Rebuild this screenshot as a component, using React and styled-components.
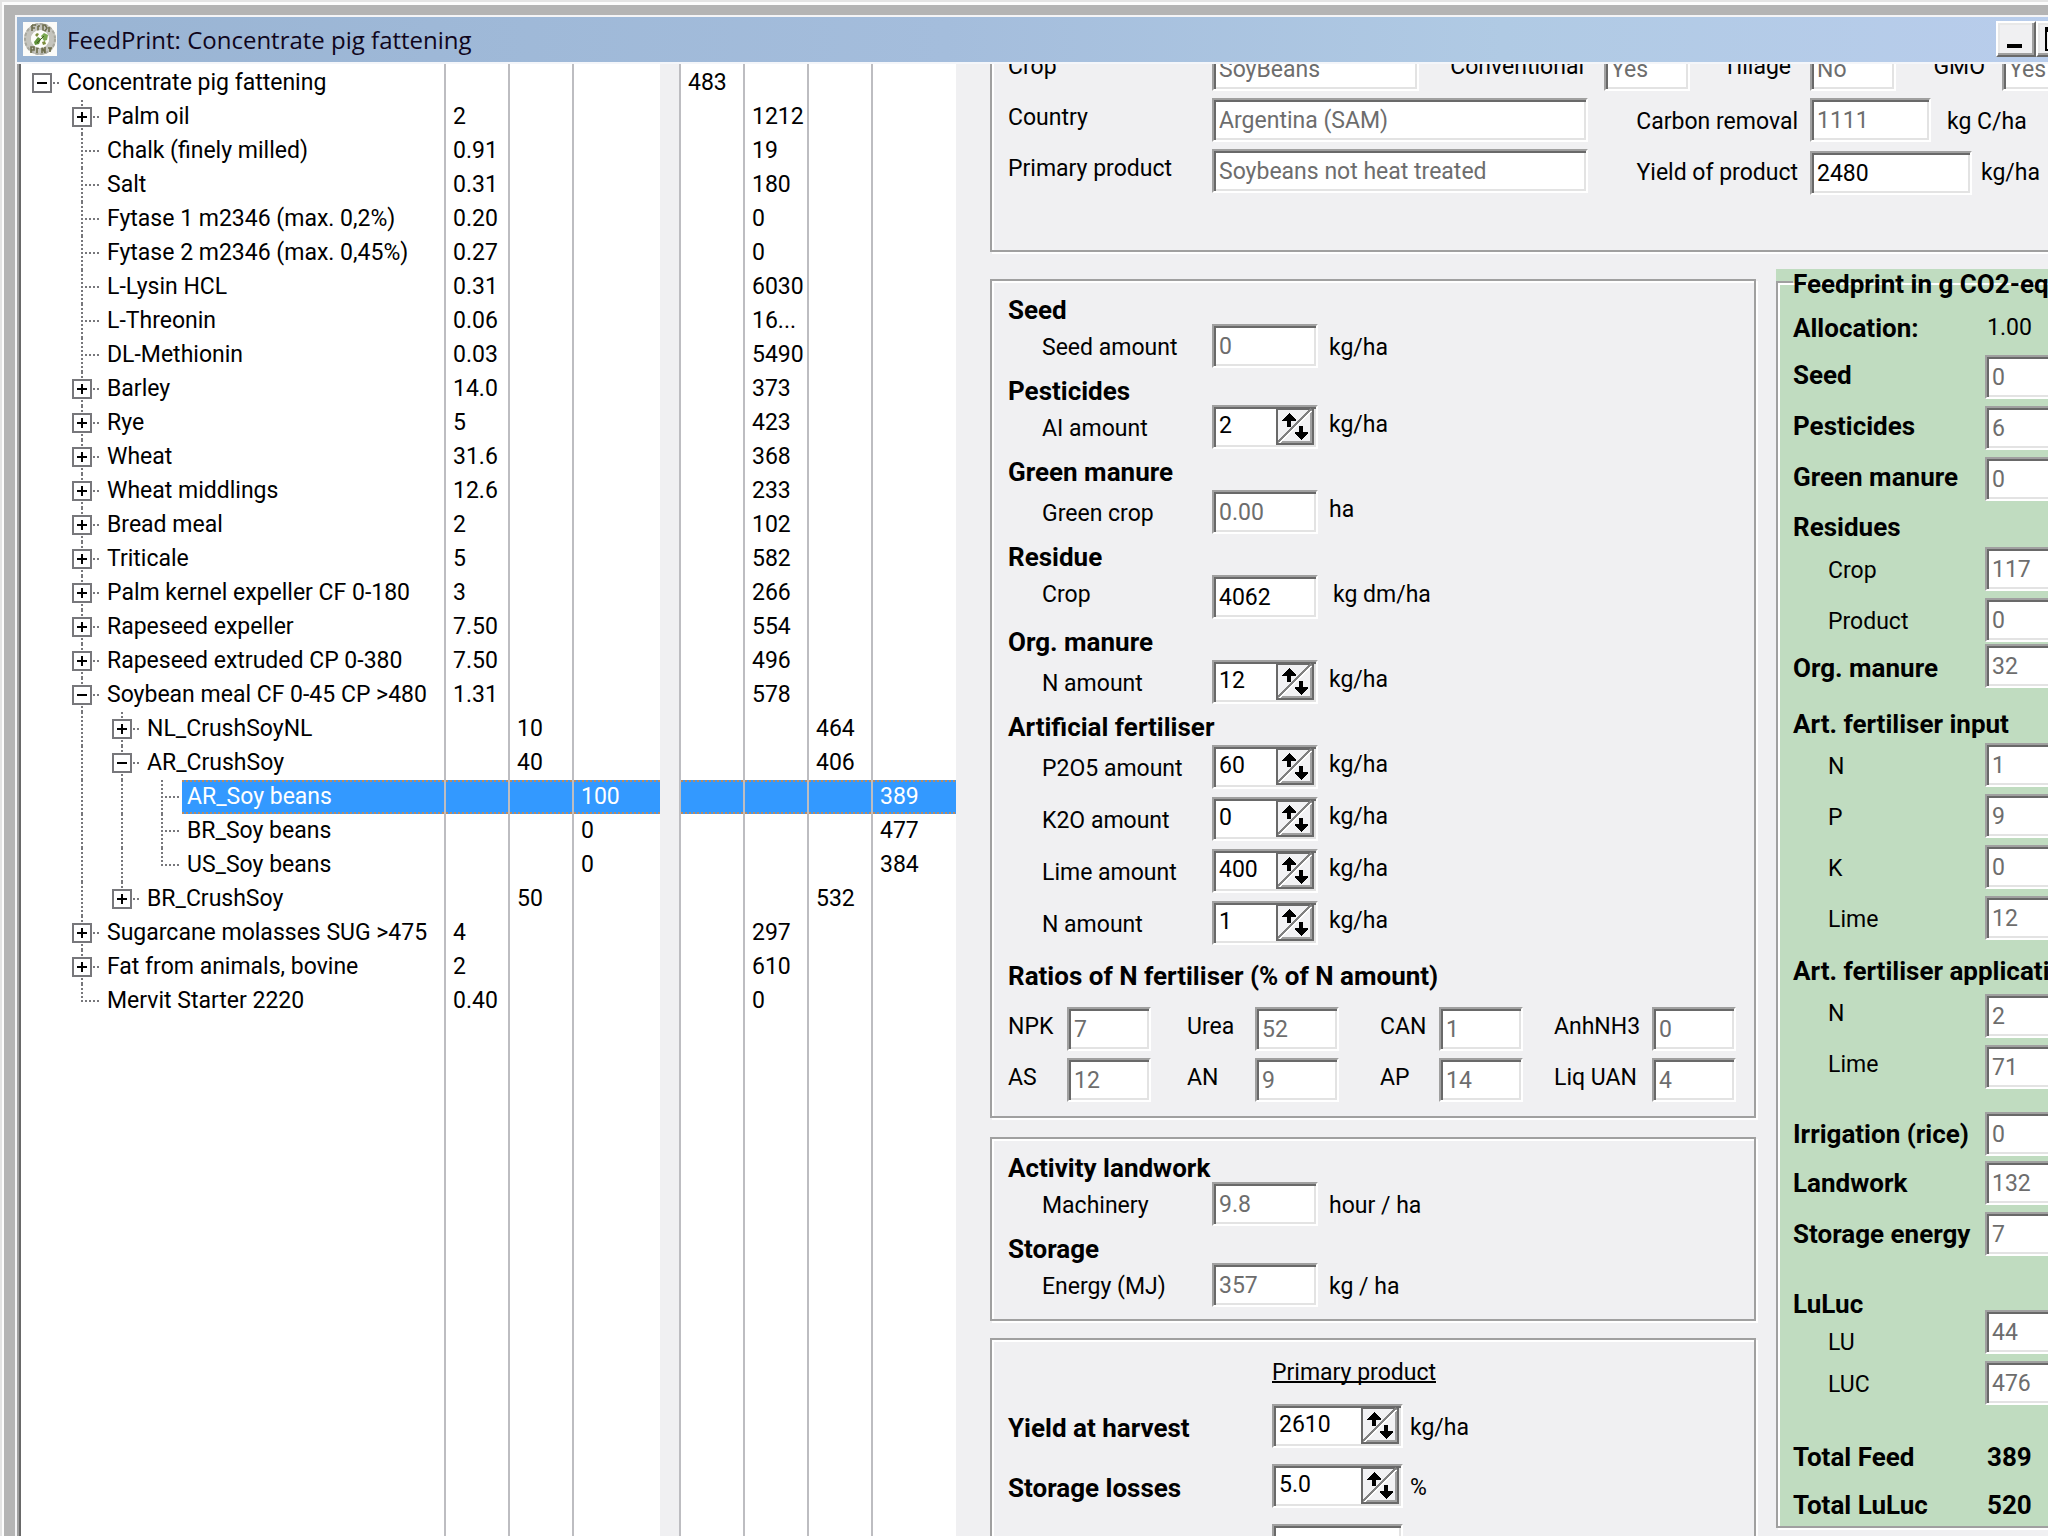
import React, { useId } from "react";
import styled, { createGlobalStyle, css } from "styled-components";

const GlobalStyle = createGlobalStyle`
  *, *::before, *::after { box-sizing: border-box; }
  body { margin: 0; overflow: hidden; background: #b4b4b4; }
  button, input { font: inherit; color: inherit; }
`;

const FACE = "#f0f0f2";
const SHADOW = "#a0a0a0";
const DARK = "#696969";

/* ---------- window frame ---------- */

const Desktop = styled.div`
  height: 100vh;
  overflow: hidden;
  font-family: Roboto, "Liberation Sans", sans-serif;
  font-size: 23px;
  line-height: 28px;
  color: #000;
`;

const Window = styled.main`
  display: flex;
  flex-direction: column;
  width: calc(100% + 51px);
  height: 100%;
  padding: 10px 15px 0 11px;
  background: #b4b4b4;
  border: solid #e4e4e4;
  border-width: 2px 2px 0;
  box-shadow: inset 2px 3px 0 #fcfcfc;
`;

const Frame = styled.div`
  display: flex;
  flex-direction: column;
  flex: 1;
  min-height: 0;
  margin-top: 3px;
  margin-left: 2px;
  border: solid #f4f4f6;
  border-width: 2px 2px 0;
`;

const TitleBar = styled.header`
  display: flex;
  align-items: center;
  flex: none;
  height: 47px;
  padding: 0 4px 2px 6px;
  border-bottom: 2px solid #f4f6fa;
  background: linear-gradient(90deg, #99b4d3, #a4bddc 45%, #b0cae4 72%, #b9cdec);
`;

const Title = styled.h1`
  flex: 1;
  margin: 0 0 0 10px;
  padding-top: 2px;
  font-family: "Open Sans", "Noto Sans", sans-serif;
  font-size: 24px;
  font-weight: 400;
  line-height: 32px;
  color: #10061c;
`;

const CaptionButton = styled.button`
  display: flex;
  flex: none;
  width: 40px;
  height: 36px;
  padding: 0;
  background: ${FACE};
  border: 2px solid;
  border-color: #fff ${DARK} ${DARK} #fff;
  box-shadow: inset -2px -2px 0 ${SHADOW}, inset 2px 2px 0 #e8e8e8;
`;

const Client = styled.div`
  display: flex;
  flex: 1;
  min-height: 0;
`;

/* ---------- feed tree ---------- */

const TreePane = styled.section`
  flex: none;
  border-left: 2px solid ${SHADOW};
  background: ${FACE};
`;

const TreeTable = styled.table`
  width: 937px;
  height: 100%;
  table-layout: fixed;
  border-spacing: 0;
  border-left: 2px solid ${DARK};
`;

const line = "2px solid #bdbdc1";

const selectedFill = css`
  color: #fff;
  background:
    repeating-linear-gradient(90deg, #b98a62 0 2px, transparent 2px 4px) 0 0 / 100% 2px no-repeat,
    repeating-linear-gradient(90deg, #b98a62 0 2px, transparent 2px 4px) 0 100% / 100% 2px no-repeat,
    #3399ff;
`;

const NameCell = styled.td`
  padding: 0 0 0 1px;
  background: #fff;
  border-right: ${line};
`;

const ValueCell = styled.td`
  padding: 0 0 0 7px;
  white-space: nowrap;
  background: #fff;
  border-right: ${(p) => (p.$last ? "none" : line)};
  border-left: ${(p) => (p.$first ? line : "none")};
  ${(p) => p.$selected && selectedFill}
`;

const SplitterCell = styled.td`
  padding: 0;
  background: ${FACE};
`;

const TreeRow = styled.tr`
  height: 34px;

  &:first-child > td { padding-top: 2px; }
`;

const NodeLine = styled.div`
  display: flex;
  height: 34px;
`;

const dotsDown = "repeating-linear-gradient(#77777b 0 2px, #fff 2px 4px)";
const dotsAcross = "repeating-linear-gradient(90deg, #77777b 0 2px, #fff 2px 4px)";

const Guide = styled.span`
  display: flex;
  align-items: center;
  justify-content: center;
  flex: none;
  width: 40px;
  background-repeat: no-repeat;
  background-image: ${dotsDown}, ${dotsAcross};
  background-position: 19px 0, 19px 16px;
  background-size:
    2px ${(p) => ({ none: "0", half: "18px", full: "100%" })[p.$down]},
    ${(p) => (p.$across ? "18px" : "0")} 2px;
`;

const NodeText = styled.span`
  flex: 1;
  padding-left: 5px;
  line-height: 34px;
  white-space: nowrap;
  ${(p) => p.$selected && selectedFill}
`;

const Expander = styled.button`
  display: block;
  width: 20px;
  height: 20px;
  padding: 0;
  background: #fff;
  border: 2px solid #77777b;

  svg { display: block; }
`;

/* ---------- form ---------- */

const FormPane = styled.section`
  flex: 1;
  min-width: 0;
  overflow: hidden;
  padding-left: 34px;
  background: ${FACE};
`;

const Scrolled = styled.div`
  margin-top: -30px;
`;

const etched = css`
  border: 2px solid ${SHADOW};
  box-shadow: 2px 2px 0 #fff, inset 2px 2px 0 #fff;
`;

const Group = styled.section`
  ${etched}
  padding: ${(p) => p.$pad};
`;

const Columns = styled.div`
  display: flex;
  align-items: flex-start;
  gap: ${(p) => p.$gap || 0}px;
  margin-top: ${(p) => p.$top || 0}px;
`;

const Inputs = styled.div`
  display: flex;
  flex-direction: column;
  flex: none;
  width: 766px;
  padding-top: 10px;
`;

const Stack = styled.div`
  display: flex;
  flex-direction: column;
  flex: none;
  gap: ${(p) => p.$gap}px;
  margin-top: ${(p) => p.$top || 0}px;
`;

const boldText = css`
  font-size: 26px;
  font-weight: 700;
`;

const Heading = styled.h2`
  margin: 0;
  padding: ${(p) => p.$top ?? 9}px 0 ${(p) => p.$bottom ?? 4}px;
  ${boldText}
  line-height: 28px;
  white-space: nowrap;
`;

const Row = styled.div`
  display: flex;
  align-items: center;
  height: 44px;
  margin-top: ${(p) => p.$top || 0}px;
`;

/* how far a caption sits above the foot of its row */
const lifts = { low: 0, middle: 4, high: 8 };

const caption = css`
  padding-top: 4px;
  padding-bottom: ${(p) => lifts[p.$lift || "low"]}px;
`;

const Label = styled.label`
  flex: none;
  width: ${(p) => p.$width}px;
  padding-left: ${(p) => p.$indent || 0}px;
  padding-right: ${(p) => p.$end || 0}px;
  ${caption}
  text-align: ${(p) => (p.$end ? "right" : "left")};
  ${(p) => p.$bold && boldText}
  white-space: nowrap;
`;

const Unit = styled.span`
  padding-left: ${(p) => p.$gap || 11}px;
  ${caption}
  white-space: nowrap;
`;

const sunken = css`
  flex: none;
  width: ${(p) => p.$width || 106}px;
  height: 44px;
  background: #fff;
  border: 2px solid;
  border-color: ${SHADOW} #fff #fff ${SHADOW};
  box-shadow: inset 2px 2px 0 ${DARK}, inset -2px -2px 0 #e3e3e3;
`;

const TextBox = styled.input`
  ${sunken}
  padding: 0 4px 0 5px;
  border-radius: 0;
  outline: none;
  color: ${(p) => (p.readOnly ? "#6d6d6d" : "#000")};
`;

const SpinFrame = styled.span`
  ${sunken}
  display: flex;
  align-items: center;
  padding: 1px 2px 2px 5px;
`;

const SpinInput = styled.input`
  flex: 1;
  min-width: 0;
  padding: 0 0 1px;
  border: 0;
  outline: none;
  background: transparent;
`;

const SpinButton = styled.button`
  flex: none;
  width: 38px;
  height: 37px;
  padding: 0;
  border: 0;
  background: ${FACE};

  svg { display: block; }
`;

const ColumnTitle = styled.h3`
  margin: 0;
  padding: 19px 0 17px 264px;
  font-size: 23px;
  font-weight: 400;
  line-height: 28px;
  text-decoration: underline;
  text-decoration-skip-ink: none;
  text-decoration-thickness: 2px;
`;

const RatioPair = styled.div`
  display: grid;
  grid-template-columns: ${(p) => p.$label}px 84px;
  row-gap: 7px;
  align-items: center;
  padding-left: ${(p) => p.$lead}px;
`;

const Footprint = styled.div`
  flex: 1;
  min-width: 0;
  background: #c0dcc0;
`;

const FootprintSet = styled.fieldset`
  ${etched}
  min-width: 0;
  margin: 0;
  padding: 0 0 1px 15px;
`;

const Legend = styled.legend`
  padding: 4px 2px 0 0;
  ${boldText}
  line-height: 22px;
  white-space: nowrap;
`;

const LandUse = styled.div`
  display: grid;
  grid-template-columns: 192px 84px;
  margin-top: 27px;
`;

const LandUseLabels = styled.div`
  display: grid;
  grid-auto-rows: 40px;
  align-items: center;
`;

const Output = styled.output`
  padding-left: 2px;
  ${caption}
  ${(p) => p.$bold && boldText}
`;

/* ---------- drawings ---------- */

const AppIcon = () => (
  <svg width="34" height="34" viewBox="0 0 34 34" aria-hidden="true">
    <rect width="34" height="34" fill="#fbfbf8" />
    <circle cx="17" cy="17" r="12.5" fill="none" stroke="#c4c4bd" strokeWidth="7" />
    <circle cx="17" cy="17" r="15" fill="none" stroke="#a8a89e" strokeWidth="2" strokeDasharray="3 2" />
    <path d="M9 3v6M9 3h4M9 6h3M15 4v5h2M15 4h2M20 3v6h2l2-3-2-3zM26 5v5" fill="none" stroke="#6d6d4c" strokeWidth="1.6" />
    <path d="M8 31v-6h3v3H8M14 31v-5h2M19 31v-6l3 6v-6M25 26h4M27 26v4" fill="none" stroke="#6d6d4c" strokeWidth="1.6" />
    <circle cx="17" cy="17" r="9" fill="#fdfdfa" />
    <path d="M11 20l4-5 3 2-2 5-4 1z" fill="#5f9138" />
    <path d="M18 14l3-3 4 2-1 5-3 1z" fill="#7ba850" />
    <path d="M19 20l3-1 1 3-3 1zM12 13l2-2 2 1-2 3z" fill="#7c8c3c" />
    <path d="M14 21l7-7" stroke="#3f5a20" strokeWidth="1" />
  </svg>
);

const MinimizeGlyph = () => (
  <svg width="36" height="32" viewBox="0 0 36 32" aria-hidden="true">
    <rect x="9" y="21" width="15" height="4" fill="#000" />
  </svg>
);

const MaximizeGlyph = () => (
  <svg width="36" height="32" viewBox="0 0 36 32" aria-hidden="true">
    <path d="M7 4h21v24H7zM9 9v17h17V9z" fill="#000" fillRule="evenodd" />
  </svg>
);

const SpinGlyph = () => (
  <svg width="38" height="37" viewBox="0 0 38 37" shapeRendering="crispEdges" aria-hidden="true">
    <rect width="38" height="37" fill={DARK} />
    <rect x="2" y="2" width="34" height="33" fill={SHADOW} />
    <rect x="2" y="2" width="32" height="31" fill="#f2f2f4" />
    <path d="M3 35L35 3" stroke="#fff" strokeWidth="2" />
    <path d="M2 34L35 1" stroke="#808080" strokeWidth="2" />
    <path d="M13 5l2 2 5 5v1h-5v6h-4v-6H6v-1l5-5z" fill="#000" />
    <path d="M25 32l-2-2-4-4v-2h4v-6h4v6h5v2l-5 4z" fill="#000" />
  </svg>
);

/* ---------- parts ---------- */

function Field({ label, value, unit, width, labelWidth = 204, indent = 0, end, lift, bold, unitLift, unitGap, edit, spin, top }) {
  const id = useId();
  return (
    <Row $top={top}>
      <Label htmlFor={id} $width={labelWidth} $indent={indent} $end={end} $lift={lift} $bold={bold}>
        {label}
      </Label>
      {spin ? (
        <SpinFrame $width={width}>
          <SpinInput id={id} defaultValue={value} />
          <SpinButton type="button" aria-label="Adjust value">
            <SpinGlyph />
          </SpinButton>
        </SpinFrame>
      ) : (
        <TextBox id={id} defaultValue={value} readOnly={!edit} $width={width} />
      )}
      {unit && (
        <Unit $gap={unitGap} $lift={unitLift}>
          {unit}
        </Unit>
      )}
    </Row>
  );
}

const Amount = (props) => <Field indent={34} unit="kg/ha" {...props} />;
const Result = (props) => <Field labelWidth={192} width={84} {...props} />;

function Ratio({ label, value }) {
  const id = useId();
  return (
    <>
      <Label htmlFor={id} $lift="high">{label}</Label>
      <TextBox id={id} defaultValue={value} readOnly $width={84} />
    </>
  );
}

/* level, name, expander, values per column, last child of its parent */
const nodes = [
  [0, "Concentrate pig fattening", "-", { 3: "483" }],
  [1, "Palm oil", "+", { 0: "2", 4: "1212" }],
  [1, "Chalk (finely milled)", "", { 0: "0.91", 4: "19" }],
  [1, "Salt", "", { 0: "0.31", 4: "180" }],
  [1, "Fytase 1 m2346 (max. 0,2%)", "", { 0: "0.20", 4: "0" }],
  [1, "Fytase 2 m2346 (max. 0,45%)", "", { 0: "0.27", 4: "0" }],
  [1, "L-Lysin HCL", "", { 0: "0.31", 4: "6030" }],
  [1, "L-Threonin", "", { 0: "0.06", 4: "16..." }],
  [1, "DL-Methionin", "", { 0: "0.03", 4: "5490" }],
  [1, "Barley", "+", { 0: "14.0", 4: "373" }],
  [1, "Rye", "+", { 0: "5", 4: "423" }],
  [1, "Wheat", "+", { 0: "31.6", 4: "368" }],
  [1, "Wheat middlings", "+", { 0: "12.6", 4: "233" }],
  [1, "Bread meal", "+", { 0: "2", 4: "102" }],
  [1, "Triticale", "+", { 0: "5", 4: "582" }],
  [1, "Palm kernel expeller CF 0-180", "+", { 0: "3", 4: "266" }],
  [1, "Rapeseed expeller", "+", { 0: "7.50", 4: "554" }],
  [1, "Rapeseed extruded CP 0-380", "+", { 0: "7.50", 4: "496" }],
  [1, "Soybean meal CF 0-45 CP >480", "-", { 0: "1.31", 4: "578" }],
  [2, "NL_CrushSoyNL", "+", { 1: "10", 5: "464" }],
  [2, "AR_CrushSoy", "-", { 1: "40", 5: "406" }],
  [3, "AR_Soy beans", "", { 2: "100", 6: "389" }],
  [3, "BR_Soy beans", "", { 2: "0", 6: "477" }],
  [3, "US_Soy beans", "", { 2: "0", 6: "384" }, true],
  [2, "BR_CrushSoy", "+", { 1: "50", 5: "532" }, true],
  [1, "Sugarcane molasses SUG >475", "+", { 0: "4", 4: "297" }],
  [1, "Fat from animals, bovine", "+", { 0: "2", 4: "610" }],
  [1, "Mervit Starter 2220", "", { 0: "0.40", 4: "0" }, true],
];

function ValueCells({ values = {}, selected }) {
  const cell = (i) => (
    <ValueCell key={i} $first={i === 3} $last={i === 2 || i === 6} $selected={selected}>
      {values[i]}
    </ValueCell>
  );
  return (
    <>
      {[0, 1, 2].map(cell)}
      <SplitterCell />
      {[3, 4, 5, 6].map(cell)}
    </>
  );
}

function Node({ node: [level, name, toggle, values, last] }) {
  const selected = name === "AR_Soy beans";
  const guides = [];
  for (let i = 0; i < level; i++) guides.push(<Guide key={i} $down={i === 0 ? "none" : "full"} />);
  const down = level === 0 ? "none" : last ? "half" : "full";
  return (
    <TreeRow>
      <NameCell>
        <NodeLine>
          {guides}
          <Guide $down={down} $across>
            {toggle && (
              <Expander type="button" aria-label={(toggle === "+" ? "Expand " : "Collapse ") + name}>
                <svg width="16" height="16" viewBox="0 0 16 16" aria-hidden="true">
                  <path d={toggle === "+" ? "M3 8h10M8 3v10" : "M3 8h10"} stroke="#000" strokeWidth="2" />
                </svg>
              </Expander>
            )}
          </Guide>
          <NodeText $selected={selected}>{name}</NodeText>
        </NodeLine>
      </NameCell>
      <ValueCells values={values} selected={selected} />
    </TreeRow>
  );
}

function FeedTree() {
  return (
    <TreePane aria-label="Feed composition">
      <TreeTable>
        <colgroup>
          {[425, 64, 64, 86, 19, 66, 64, 64, 83].map((width, i) => (
            <col key={i} width={width} />
          ))}
        </colgroup>
        <tbody>
          {nodes.map((node) => (
            <Node key={node[1]} node={node} />
          ))}
          <tr>
            <NameCell />
            <ValueCells />
          </tr>
        </tbody>
      </TreeTable>
    </TreePane>
  );
}

function CropGroup() {
  return (
    <Group $pad="11px 0 55px 16px">
      <Columns>
        <Field label="Crop" value="SoyBeans" width={207} lift="high" />
        <Field label="Conventional" value="Yes" labelWidth={185} end={20} width={86} lift="high" />
        <Field label="Tillage" value="No" labelWidth={120} end={19} width={86} lift="high" />
        <Field label="GMO" value="Yes" labelWidth={106} end={17} width={86} lift="high" />
      </Columns>
      <Columns $top={7}>
        <Stack $gap={7}>
          <Field label="Country" value="Argentina (SAM)" width={376} lift="high" />
          <Field label="Primary product" value="Soybeans not heat treated" width={376} lift="high" />
        </Stack>
        <Stack $gap={9}>
          <Field label="Carbon removal" value="1111" labelWidth={222} end={12} width={121} unit="kg C/ha" unitGap={16} />
          <Field label="Yield of product" value="2480" labelWidth={222} end={12} width={162} unit="kg/ha" unitGap={9} edit lift="middle" unitLift="middle" />
        </Stack>
      </Columns>
    </Group>
  );
}

function CultivationGroup() {
  return (
    <Group $pad="6px 16px 14px">
      <Heading $bottom={0}>Seed</Heading>
      <Amount label="Seed amount" value="0" />
      <Heading $bottom={0}>Pesticides</Heading>
      <Amount label="AI amount" value="2" spin unitLift="high" />
      <Heading>Green manure</Heading>
      <Amount label="Green crop" value="0.00" unit="ha" unitLift="high" />
      <Heading>Residue</Heading>
      <Amount label="Crop" value="4062" unit="kg dm/ha" unitGap={15} edit lift="high" unitLift="high" />
      <Heading>Org. manure</Heading>
      <Amount label="N amount" value="12" spin unitLift="high" />
      <Heading>Artificial fertiliser</Heading>
      <Stack $gap={8}>
        <Amount label="P2O5 amount" value="60" spin unitLift="high" />
        <Amount label="K2O amount" value="0" spin unitLift="high" />
        <Amount label="Lime amount" value="400" spin unitLift="high" />
        <Amount label="N amount" value="1" spin unitLift="high" />
      </Stack>
      <Heading $top={17} $bottom={17}>Ratios of N fertiliser (% of N amount)</Heading>
      <Columns>
        <RatioPair $label={59} $lead={0}>
          <Ratio label="NPK" value="7" />
          <Ratio label="AS" value="12" />
        </RatioPair>
        <RatioPair $label={68} $lead={36}>
          <Ratio label="Urea" value="52" />
          <Ratio label="AN" value="9" />
        </RatioPair>
        <RatioPair $label={59} $lead={41}>
          <Ratio label="CAN" value="1" />
          <Ratio label="AP" value="14" />
        </RatioPair>
        <RatioPair $label={98} $lead={31}>
          <Ratio label="AnhNH3" value="0" />
          <Ratio label="Liq UAN" value="4" />
        </RatioPair>
      </Columns>
    </Group>
  );
}

function FootprintPanel() {
  return (
    <Footprint>
      <FootprintSet>
        <Legend>Feedprint in g CO2-eq/kg</Legend>
        <Row $top={9}>
          <Label as="span" $width={192} $bold>Allocation:</Label>
          <Output>1.00</Output>
        </Row>
        <Result label="Seed" value="0" bold lift="high" top={7} />
        <Result label="Pesticides" value="6" bold lift="high" top={7} />
        <Result label="Green manure" value="0" bold lift="high" top={7} />
        <Heading $top={12} $bottom={6}>Residues</Heading>
        <Result label="Crop" value="117" indent={35} />
        <Result label="Product" value="0" indent={35} top={7} />
        <Result label="Org. manure" value="32" bold top={2} />
        <Heading $top={22} $bottom={5}>Art. fertiliser input</Heading>
        <Stack $gap={7}>
          <Result label="N" value="1" indent={35} />
          <Result label="P" value="9" indent={35} />
          <Result label="K" value="0" indent={35} />
          <Result label="Lime" value="12" indent={35} />
        </Stack>
        <Heading $top={17} $bottom={9}>Art. fertiliser application</Heading>
        <Stack $gap={7}>
          <Result label="N" value="2" indent={35} lift="high" />
          <Result label="Lime" value="71" indent={35} lift="high" />
        </Stack>
        <Result label="Irrigation (rice)" value="0" bold lift="middle" top={23} />
        <Result label="Landwork" value="132" bold lift="middle" top={5} />
        <Result label="Storage energy" value="7" bold lift="middle" top={7} />
        <LandUse>
          <LandUseLabels>
            <Heading $top={2} $bottom={0}>LuLuc</Heading>
            <Label htmlFor="lu" $indent={35} $lift="middle">LU</Label>
            <Label htmlFor="luc" $indent={35}>LUC</Label>
          </LandUseLabels>
          <Stack $gap={7} $top={27}>
            <TextBox id="lu" defaultValue="44" readOnly $width={84} />
            <TextBox id="luc" defaultValue="476" readOnly $width={84} />
          </Stack>
        </LandUse>
        <Row $top={28}>
          <Label as="span" $width={192} $bold>Total Feed</Label>
          <Output $bold>389</Output>
        </Row>
        <Row $top={4}>
          <Label as="span" $width={192} $bold>Total LuLuc</Label>
          <Output $bold>520</Output>
        </Row>
      </FootprintSet>
    </Footprint>
  );
}

export default function App() {
  return (
    <Desktop>
      <GlobalStyle />
      <Window>
        <Frame>
          <TitleBar>
            <AppIcon />
            <Title>FeedPrint: Concentrate pig fattening</Title>
            <CaptionButton type="button" aria-label="Minimize"><MinimizeGlyph /></CaptionButton>
            <CaptionButton type="button" aria-label="Maximize"><MaximizeGlyph /></CaptionButton>
          </TitleBar>
          <Client>
            <FeedTree />
            <FormPane>
              <Scrolled>
                <CropGroup />
                <Columns $gap={20} $top={17}>
                  <Inputs>
                    <CultivationGroup />
                    <Stack $gap={17} $top={19}>
                      <Group $pad="6px 16px 12px">
                        <Heading $bottom={0}>Activity landwork</Heading>
                        <Amount label="Machinery" value="9.8" unit="hour / ha" />
                        <Heading $bottom={0}>Storage</Heading>
                        <Amount label="Energy (MJ)" value="357" unit="kg / ha" />
                      </Group>
                      <Group $pad="0 16px 24px">
                        <ColumnTitle>Primary product</ColumnTitle>
                        <Stack $gap={16}>
                          <Field label="Yield at harvest" value="2610" labelWidth={264} width={131} unit="kg/ha" unitGap={7} bold spin />
                          <Field label="Storage losses" value="5.0" labelWidth={264} width={131} unit="%" unitGap={7} bold spin />
                          <Field label="" value="870" labelWidth={264} width={131} />
                        </Stack>
                      </Group>
                    </Stack>
                  </Inputs>
                  <FootprintPanel />
                </Columns>
              </Scrolled>
            </FormPane>
          </Client>
        </Frame>
      </Window>
    </Desktop>
  );
}
